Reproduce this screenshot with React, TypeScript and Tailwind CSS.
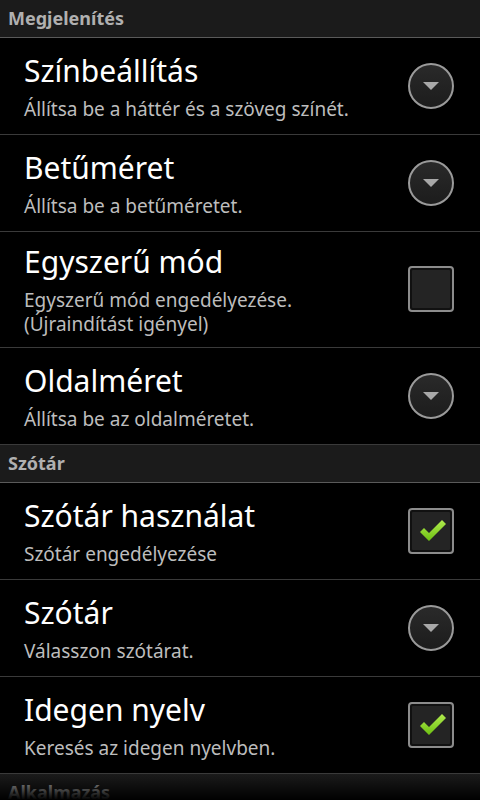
const font = { fontFamily: '"Noto Sans", "Open Sans", sans-serif' };

type Pref = {
  title: string;
  summary: string[];
  widget: "list" | "check" | "checked";
};

const sections: { name: string; items: Pref[] }[] = [
  {
    name: "Megjelenítés",
    items: [
      { title: "Színbeállítás", summary: ["Állítsa be a háttér és a szöveg színét."], widget: "list" },
      { title: "Betűméret", summary: ["Állítsa be a betűméretet."], widget: "list" },
      {
        title: "Egyszerű mód",
        summary: ["Egyszerű mód engedélyezése.", "(Újraindítást igényel)"],
        widget: "check",
      },
      { title: "Oldalméret", summary: ["Állítsa be az oldalméretet."], widget: "list" },
    ],
  },
  {
    name: "Szótár",
    items: [
      { title: "Szótár használat", summary: ["Szótár engedélyezése"], widget: "checked" },
      { title: "Szótár", summary: ["Válasszon szótárat."], widget: "list" },
      { title: "Idegen nyelv", summary: ["Keresés az idegen nyelvben."], widget: "checked" },
    ],
  },
  { name: "Alkalmazás", items: [] },
];

function DropdownIcon() {
  return (
    <svg width="48" height="48" viewBox="0 0 48 48">
      <defs>
        <linearGradient id="dd" x1="0" y1="0" x2="0" y2="1">
          <stop offset="0" stopColor="#2a2a2a" />
          <stop offset="1" stopColor="#1c1c1c" />
        </linearGradient>
      </defs>
      <circle cx="24" cy="24" r="22" fill="url(#dd)" stroke="#9a9a9a" strokeWidth="2" />
      <path d="M16 20 L32 20 L24 28 Z" fill="#a8a8a8" />
    </svg>
  );
}

function CheckIcon({ checked }: { checked: boolean }) {
  return (
    <svg width="46" height="46" viewBox="0 0 46 46">
      <defs>
        <linearGradient id="ck" x1="0" y1="0" x2="0" y2="1">
          <stop offset="0" stopColor="#b2ec4e" />
          <stop offset="1" stopColor="#6cbf12" />
        </linearGradient>
      </defs>
      <rect x="1" y="1" width="44" height="44" rx="3" fill="#111" stroke="#8c8c8c" strokeWidth="2" />
      <rect x="4" y="4" width="38" height="38" rx="1" fill="#242424" />
      {checked && <path d="M12 24 L16 20 L21 25 L34 12 L38 16 L21 33 Z" fill="url(#ck)" />}
    </svg>
  );
}

function Row({ pref }: { pref: Pref }) {
  return (
    <div className="flex min-h-[97px] items-center border-b border-[#3a3a3a] pt-[10px] pb-[11px] pl-6 pr-[25px]">
      <div className="flex flex-1 flex-col">
        <div className="text-[30px] leading-[40px] text-white">{pref.title}</div>
        <div className="mt-[6px] flex flex-col">
          {pref.summary.map((s) => (
            <div key={s} className="text-[19px] leading-[24px] text-[#bdbdbd]">
              {s}
            </div>
          ))}
        </div>
      </div>
      <div className="flex w-[48px] justify-center">
        {pref.widget === "list" ? <DropdownIcon /> : <CheckIcon checked={pref.widget === "checked"} />}
      </div>
    </div>
  );
}

export default function App() {
  return (
    <div className="relative h-[800px] w-[480px] overflow-hidden bg-black" style={font}>
      {sections.map((sec) => (
        <div key={sec.name}>
          <div className="h-[38px] border-b border-[#5a5a5a] bg-[#1b1b1b] pl-2 text-[18px] font-bold leading-[37px] text-[#b0b0b0]">
            {sec.name}
          </div>
          {sec.items.map((p) => (
            <Row key={p.title} pref={p} />
          ))}
        </div>
      ))}
      <div className="pointer-events-none absolute bottom-0 left-0 h-[26px] w-full bg-gradient-to-b from-transparent to-black" />
    </div>
  );
}
